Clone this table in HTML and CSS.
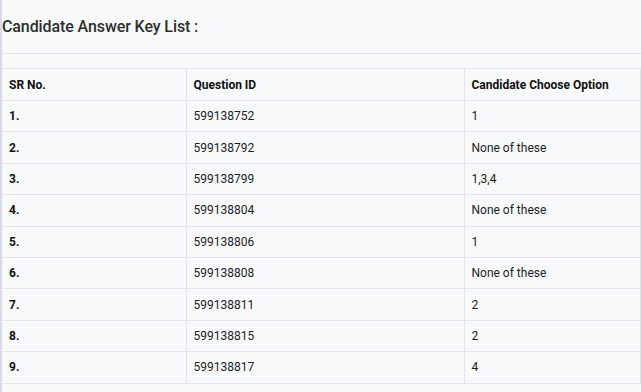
FILE: index.html
```html
<!DOCTYPE html>
<html lang="en">
<head>
  <meta charset="UTF-8">
  <title>Candidate Answer Key</title>
  <link rel="stylesheet" href="styles.css">
</head>
<body>
  <div class="page">
    <div class="page-header">
      <h2 class="page-title">Candidate Answer Key List :</h2>
    </div>
    <table class="answer-table">
      <colgroup>
        <col class="col-sr">
        <col class="col-qid">
        <col class="col-opt">
      </colgroup>
      <thead>
        <tr>
          <th>SR No.</th>
          <th>Question ID</th>
          <th>Candidate Choose Option</th>
        </tr>
      </thead>
      <tbody>
        <tr><td class="sr">1.</td><td>599138752</td><td>1</td></tr>
        <tr><td class="sr">2.</td><td>599138792</td><td>None of these</td></tr>
        <tr><td class="sr">3.</td><td>599138799</td><td>1,3,4</td></tr>
        <tr><td class="sr">4.</td><td>599138804</td><td>None of these</td></tr>
        <tr><td class="sr">5.</td><td>599138806</td><td>1</td></tr>
        <tr><td class="sr">6.</td><td>599138808</td><td>None of these</td></tr>
        <tr><td class="sr">7.</td><td>599138811</td><td>2</td></tr>
        <tr><td class="sr">8.</td><td>599138815</td><td>2</td></tr>
        <tr><td class="sr">9.</td><td>599138817</td><td>4</td></tr>
      </tbody>
    </table>
  </div>
</body>
</html>
```

FILE: styles.css
```css
body {
    margin: 0;
    padding: 0;
    font-family: Roboto, 'Liberation Sans', sans-serif;
    background-color: #f8f9fb;
    color: #222;
}

.page {
    border-left: 2px solid #d6dbe6;
    min-height: 392px;
}

.page-header {
    height: 53px;
    border-bottom: 1px solid #e2e4e8;
    display: flex;
    align-items: center;
}

.page-title {
    margin: 0;
    padding-bottom: 1px;
    font-size: 16px;
    font-weight: 500;
    letter-spacing: -0.1px;
    color: #2e2e2e;
}

.answer-table {
    width: 639px;
    margin-top: 14px;
    border-collapse: collapse;
    table-layout: fixed;
    font-size: 12px;
}

.col-sr { width: 184px; }
.col-qid { width: 278px; }

.answer-table th,
.answer-table td {
    border: 1px solid #e2e4e8;
    text-align: left;
    padding: 0 7px;
    line-height: 14px;
}

.answer-table th:first-child,
.answer-table td:first-child {
    border-left: none;
}

.answer-table th {
    height: 31px;
    font-weight: 700;
    color: #111;
}

.answer-table td {
    height: 30.4px;
    color: #1e1e1e;
}

.answer-table td.sr {
    font-weight: 700;
    color: #111;
}
```
